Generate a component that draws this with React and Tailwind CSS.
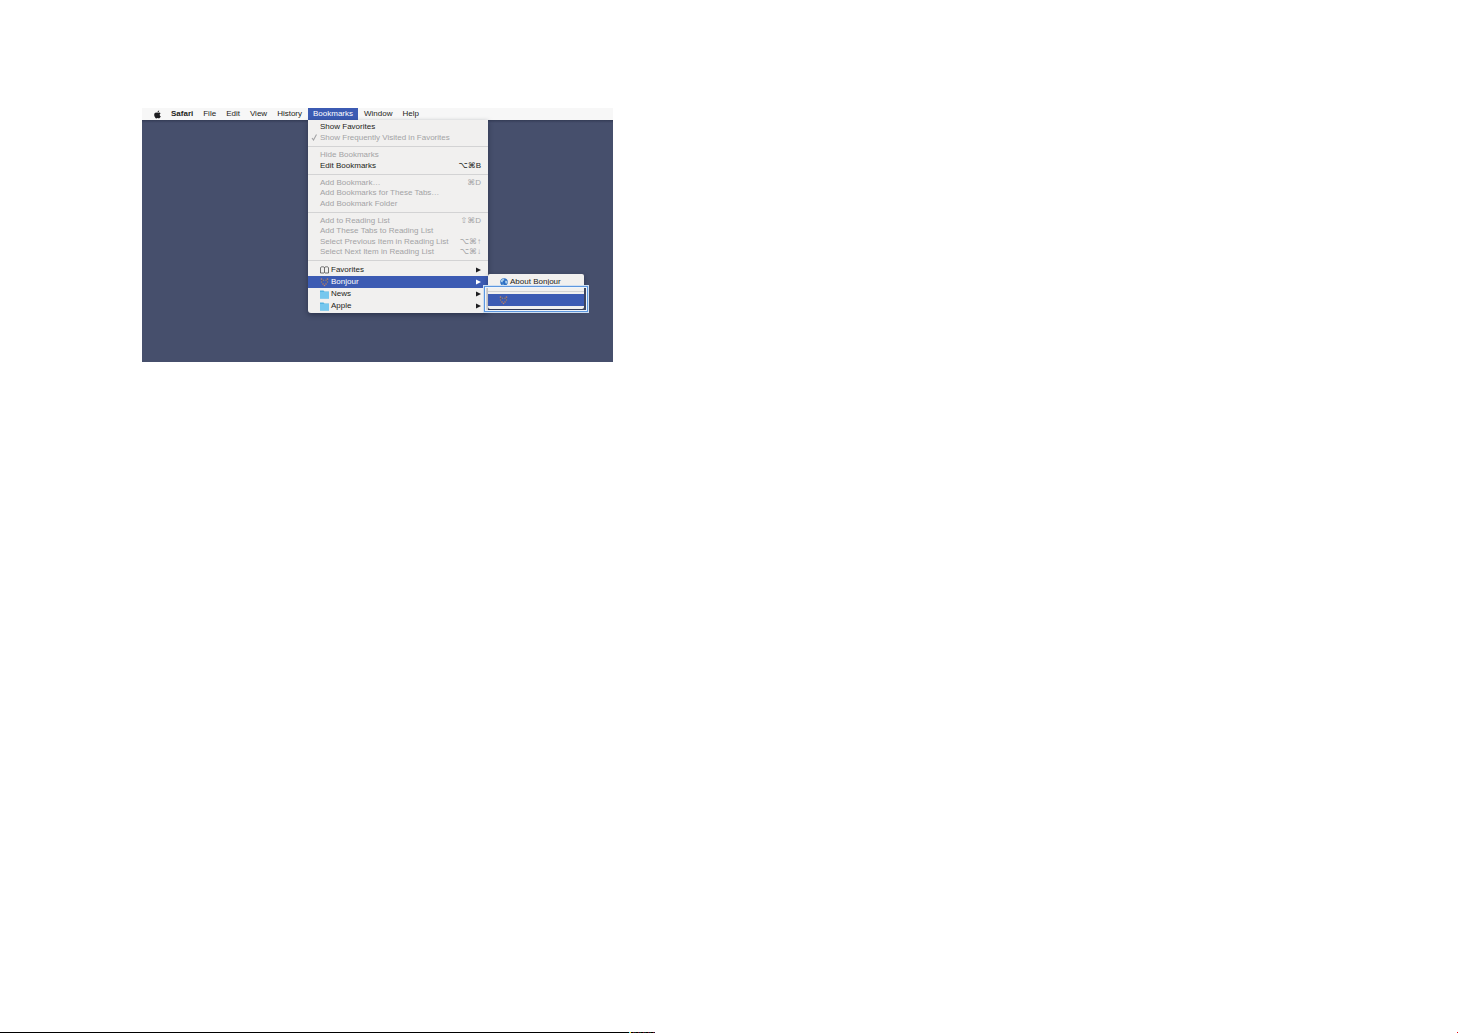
import React from "react";
import { FaApple } from "react-icons/fa";

const menus = ["File", "Edit", "View", "History", "Bookmarks", "Window", "Help"];

function Book() {
  return (
    <svg className="h-2 w-[9px]" viewBox="0 0 18 16" fill="none" stroke="#444" strokeWidth="1.5" aria-hidden="true">
      <path d="M9 14V4C9 2 7 1.5 5 1.5S1 2 1 4v10h7M9 4c0-2 2-2.5 4-2.5s4 .5 4 2.5v10h-7" />
    </svg>
  );
}

function Folder() {
  return (
    <svg className="h-[9px] w-[9px]" viewBox="0 0 18 18" aria-hidden="true">
      <path d="M0 1h7l2 2h9v14H0z" fill="#55b4e2" />
      <path d="M0 4h18v13H0z" fill="#76c7ee" />
    </svg>
  );
}

function BonjourIcon() {
  return (
    <svg className="h-[10px] w-[9px]" viewBox="0 0 18 20" aria-hidden="true">
      <g fill="none" stroke="#5d5870" strokeWidth="1.6">
        <path d="M3 5l3 2 3-2 3 2 3-2M3 5v5l3 4 3 3 3-3 3-4V5M6 7l-3 3M12 7l3 3" />
      </g>
      <g fill="#b98270">
        <circle cx="3" cy="4" r="1.7" />
        <circle cx="15" cy="4" r="1.7" />
        <circle cx="6" cy="14" r="1.5" />
        <circle cx="12" cy="14" r="1.5" />
        <circle cx="9" cy="17" r="1.6" />
      </g>
      <g fill="#8d8182">
        <circle cx="3" cy="10" r="1.5" />
        <circle cx="15" cy="10" r="1.5" />
        <circle cx="7" cy="6.5" r="1.4" />
        <circle cx="12" cy="6.5" r="1.4" />
      </g>
    </svg>
  );
}

function Globe() {
  return (
    <svg className="h-2 w-2" viewBox="0 0 16 16" aria-hidden="true">
      <circle cx="8" cy="8" r="7.5" fill="#2d6fc4" />
      <path d="M2 4l5-3 2 3-3 2-1 3-3-1zM11 5l3 1 1 3-3 3-2-4z" fill="#a9cdea" />
      <path d="M5 11l3 1-1 3-3-2z" fill="#6fa6d8" />
    </svg>
  );
}

function Arrow() {
  return (
    <svg className="ml-auto h-[6px] w-[5px] fill-current" viewBox="0 0 10 12" aria-hidden="true">
      <path d="M0 1l10 5-10 5z" />
    </svg>
  );
}

function Item({ label, keys, checked, enabled }) {
  return (
    <li className="flex flex-1">
      <button
        type="button"
        disabled={!enabled}
        className={`flex w-full items-center pr-[7px] leading-[10px] ${enabled ? "text-[#1d1d20]" : "text-[#a3a3a5]"}`}
      >
        <span className="flex w-3 shrink-0 justify-center">
          {checked && (
            <svg className="h-[7px] w-[7px]" viewBox="0 0 14 14" fill="none" stroke="currentColor" strokeWidth="2.2" aria-hidden="true">
              <path d="M2 8l3 4 6-11" />
            </svg>
          )}
        </span>
        <span className="whitespace-nowrap">{label}</span>
        {keys && <span className="ml-auto whitespace-nowrap">{keys}</span>}
      </button>
    </li>
  );
}

function FolderItem({ label, icon, selected }) {
  return (
    <li>
      <button
        type="button"
        className={`flex h-3 w-full items-center gap-[2px] pr-[7px] pl-3 leading-[10px] ${selected ? "bg-[#3c5bb3] text-white" : "text-[#1d1d20]"}`}
      >
        {icon}
        <span>{label}</span>
        <Arrow />
      </button>
    </li>
  );
}

function Divider() {
  return <hr className="my-[3px] border-[#d3d3d4]" />;
}

function BookmarksMenu() {
  return (
    <div className="absolute top-full left-0 w-[180px] rounded-b-[3px] bg-[#f1f0ef] py-px shadow-[0_2px_5px_rgba(20,25,45,0.5)]">
      <ul className="flex h-[22px] flex-col">
        <Item label="Show Favorites" enabled />
        <Item label="Show Frequently Visited in Favorites" checked />
      </ul>
      <Divider />
      <ul className="flex h-[21px] flex-col">
        <Item label="Hide Bookmarks" />
        <Item label="Edit Bookmarks" keys="⌥⌘B" enabled />
      </ul>
      <Divider />
      <ul className="flex h-[31px] flex-col">
        <Item label="Add Bookmark…" keys="⌘D" />
        <Item label="Add Bookmarks for These Tabs…" />
        <Item label="Add Bookmark Folder" />
      </ul>
      <Divider />
      <ul className="flex h-[41px] flex-col">
        <Item label="Add to Reading List" keys="⇧⌘D" />
        <Item label="Add These Tabs to Reading List" />
        <Item label="Select Previous Item in Reading List" keys="⌥⌘↑" />
        <Item label="Select Next Item in Reading List" keys="⌥⌘↓" />
      </ul>
      <Divider />
      <ul>
        <FolderItem label="Favorites" icon={<Book />} />
        <FolderItem label="Bonjour" icon={<BonjourIcon />} selected />
        <FolderItem label="News" icon={<Folder />} />
        <FolderItem label="Apple" icon={<Folder />} />
      </ul>
      <div className="absolute top-[154px] left-full w-[96px] rounded-[2px] bg-[#f1f0ef] pt-[2px] shadow-[0_2px_5px_rgba(20,25,45,0.5)]">
        <button type="button" className="flex h-3 w-full items-center gap-[2px] pl-3 leading-[10px] whitespace-nowrap text-[#1d1d20]">
          <Globe />
          <span>About Bonjour</span>
        </button>
        <hr className="mt-[3px] border-[#d3d3d4]" />
        <button type="button" aria-label="Bonjour device" className="mt-[2px] flex h-3 w-full items-center bg-[#3c5bb3] pl-[11px]">
          <BonjourIcon />
        </button>
        <div className="h-[3px]" />
      </div>
      <div className="absolute top-[167px] left-[177px] h-[24px] w-[102px] border border-[#eef4fb] outline outline-[#5c97df] ring-2 ring-[#cfdff2]" />
    </div>
  );
}

export default function App() {
  return (
    <div className="flex min-h-screen flex-col bg-white pt-[108px] font-['Liberation_Sans','DejaVu_Sans',sans-serif] text-[8px]">
      <main className="ml-[142px] flex h-[254px] w-full max-w-[471px] flex-col bg-[#464f6c]">
        <nav className="flex h-3 shrink-0 items-stretch bg-[#f7f7f7] pl-[10px] leading-3 text-[#1d1d20]">
          <button type="button" aria-label="Apple menu" className="mr-[4px] flex w-[10px] items-center justify-center">
            <FaApple className="h-[9px] w-[9px]" />
          </button>
          <button type="button" className="px-[5px] font-bold">Safari</button>
          {menus.map((name) => (
            <div key={name} className={name === "Bookmarks" ? "relative mx-px flex" : "flex"}>
              <button
                type="button"
                className={`px-[5px] ${name === "Bookmarks" ? "bg-[#3c5bb3] text-white" : ""}`}
              >
                {name}
              </button>
              {name === "Bookmarks" && <BookmarksMenu />}
            </div>
          ))}
        </nav>
        <div className="h-[3px] bg-linear-to-b from-[#343c56] to-[#464f6c]" />
      </main>
      <footer className="mt-auto flex h-px">
        <span className="w-[629px] bg-black" />
        <span className="w-px bg-cyan-300" />
        <span className="w-px bg-yellow-300" />
        <span className="w-6 bg-[repeating-linear-gradient(90deg,#000_0px,#000_2px,#7a1010_2px,#7a1010_3px,#101040_3px,#101040_4px,#104010_4px,#104010_5px)]" />
        <span className="ml-auto w-px bg-red-600" />
      </footer>
    </div>
  );
}
